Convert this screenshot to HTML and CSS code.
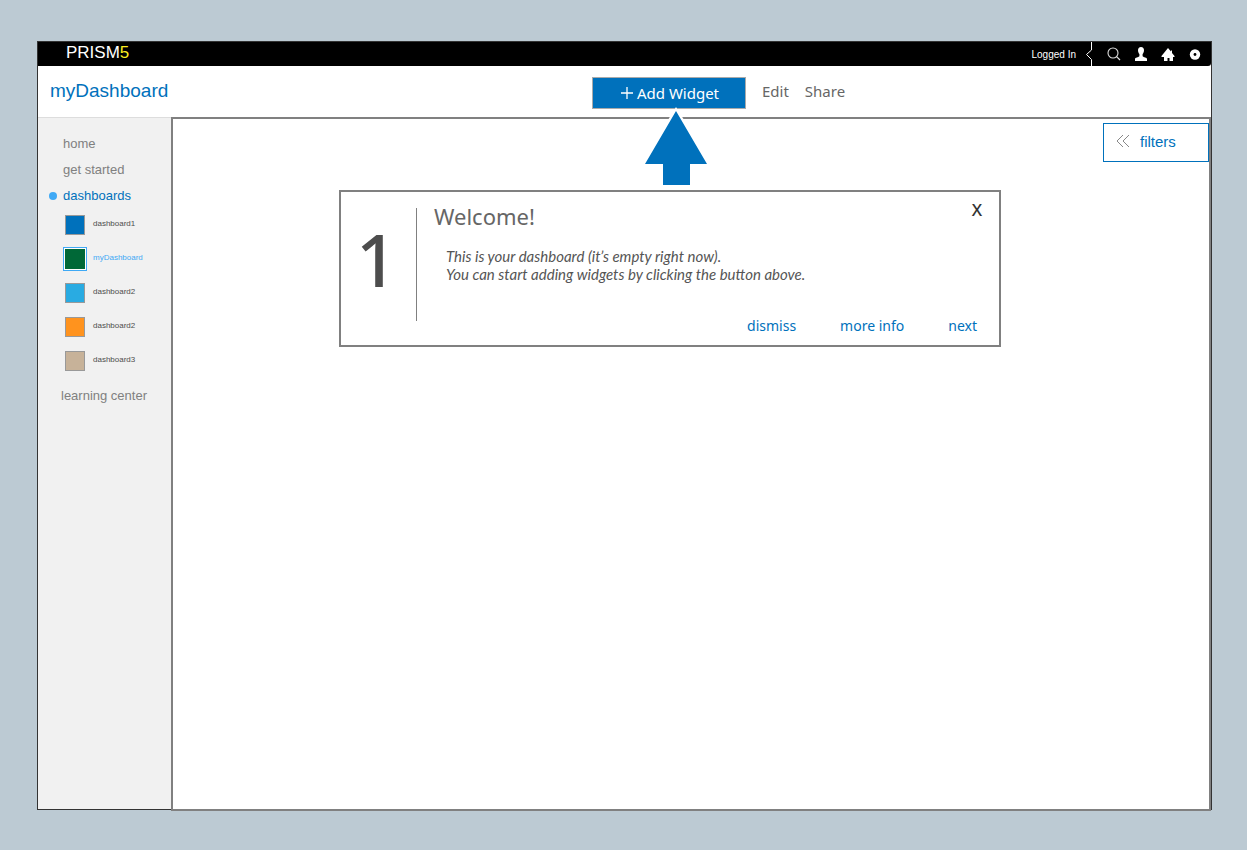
FILE: index.html
```html
<!DOCTYPE html>
<html lang="en">
<head>
<meta charset="utf-8">
<meta name="viewport" content="width=device-width, initial-scale=1">
<title>PRISM5 – myDashboard</title>
<link rel="stylesheet" href="styles.css">
</head>
<body>
<div class="frame">
  <header class="topbar">
    <a class="brand" href="#">PRISM<span class="brand-accent">5</span></a>
    <div class="account">
      <span class="status">Logged In</span>
      <svg class="notch" width="8" height="24" viewBox="0 0 8 24" aria-hidden="true"><path d="M6.500 0V8L1.500 12.500L6.500 17.500V24" fill="none" stroke="#fff"/></svg>
      <button class="icon-button search" aria-label="Search"><svg width="16" height="16" viewBox="0 0 16 16"><circle cx="7" cy="7" r="5" fill="none" stroke="#ddd" stroke-width="1.100"/><path d="M10.600 10.600L14 14" stroke="#ddd" stroke-width="1.300"/></svg></button>
      <button class="icon-button" aria-label="Profile"><svg width="14" height="16" viewBox="0 0 14 16"><path d="M7 1C9 1 10 2.300 10 4.200C10 6 9.200 7.300 8.600 8V10.300C9.500 11.300 13 11.500 13 13V15H1V13C1 11.500 4.500 11.300 5.400 10.300V8C4.800 7.300 4 6 4 4.200C4 2.300 5 1 7 1Z" fill="#fff"/></svg></button>
      <button class="icon-button" aria-label="Home"><svg width="14" height="16" viewBox="0 0 14 16"><path d="M7 2L10 5.500V4.500H11V7L13.500 10V11H12V15H8.500V12H6.500V15H3V11H.5V10Z" fill="#fff"/></svg></button>
      <button class="icon-button" aria-label="Settings"><svg width="14" height="16" viewBox="0 0 14 16"><circle cx="7" cy="8.500" r="5.200" fill="#fff"/><circle cx="7" cy="8.500" r="1.400" fill="#000"/></svg></button>
    </div>
  </header>
  <div class="toolbar">
    <h1 class="title">myDashboard</h1>
    <div class="actions">
      <button class="add"><svg width="12" height="12" viewBox="0 0 12 12" aria-hidden="true"><path d="M6 0V12M0 6H12" stroke="#fff" stroke-width="1.300"/></svg>Add Widget</button>
      <button class="action">Edit</button>
      <button class="action">Share</button>
    </div>
  </div>
  <div class="content">
    <nav class="sidebar">
      <ul class="menu">
        <li><a class="menu-link" href="#">home</a></li>
        <li><a class="menu-link" href="#">get started</a></li>
        <li class="current"><a class="menu-link" href="#">dashboards</a>
          <ul class="boards">
            <li><a class="board" href="#"><span class="swatch blue"></span><span class="board-name">dashboard1</span></a></li>
            <li><a class="board selected" href="#"><span class="swatch green"></span><span class="board-name">myDashboard</span></a></li>
            <li><a class="board" href="#"><span class="swatch sky"></span><span class="board-name">dashboard2</span></a></li>
            <li><a class="board" href="#"><span class="swatch orange"></span><span class="board-name">dashboard2</span></a></li>
            <li><a class="board" href="#"><span class="swatch tan"></span><span class="board-name">dashboard3</span></a></li>
          </ul>
        </li>
        <li><a class="menu-link learning" href="#">learning center</a></li>
      </ul>
    </nav>
    <main class="canvas">
      <button class="filters"><svg width="14" height="12" viewBox="0 0 14 12" aria-hidden="true"><path d="M7 0L1 6L7 12M13 0L7 6L13 12" fill="none" stroke="#888"/></svg>filters</button>
      <section class="tip" aria-labelledby="tip-title">
        <svg class="arrow" width="68" height="78" viewBox="0 0 68 78" aria-hidden="true"><path d="M34 0L68 55H49V78H19V55H0Z" fill="#fff"/><path d="M34 4L65 57H48V78H21V57H3Z" fill="#0071bc"/></svg>
        <div class="step">1</div>
        <div class="tip-body">
          <div class="tip-head">
            <h2 class="tip-title" id="tip-title">Welcome!</h2>
            <button class="close" aria-label="Close">X</button>
          </div>
          <p class="tip-text">This is your dashboard (it’s empty right now).<br>You can start adding widgets by clicking the button above.</p>
          <div class="tip-links">
            <a href="#">dismiss</a>
            <a href="#">more info</a>
            <a href="#">next</a>
          </div>
        </div>
      </section>
    </main>
  </div>
</div>
</body>
</html>
```
FILE: styles.css
```css
* { box-sizing: border-box; }
body {
  margin: 0;
  min-height: 100vh;
  display: flex;
  padding: 41px 35px 40px 37px;
  background: #bccad3;
  font-family: "Liberation Sans", Arial, sans-serif;
}
button { margin: 0; padding: 0; border: 0; background: none; font: inherit; color: inherit; cursor: pointer; }
a { color: inherit; text-decoration: none; }
ul { list-style: none; margin: 0; padding: 0; }
h1, h2, p { margin: 0; font-weight: normal; }

.frame { flex: 1; min-width: 0; display: flex; flex-direction: column; border: 1px solid #333; background: #fff; }

.topbar { display: flex; justify-content: space-between; align-items: center; height: 24px; padding: 0 9px 0 28px; background: #000; color: #fff; border-radius: 0 0 3px 0; }
.brand { font-size: 17px; line-height: 20px; padding-bottom: 3px; }
.brand-accent { color: #fcee21; }
.account { display: flex; align-items: center; gap: 13px; }
.status { font-size: 10px; margin-right: -4px; }
.notch { display: block; }
.icon-button { display: flex; }
.search { margin-right: -1px; }

.toolbar { display: flex; align-items: center; height: 51px; }
.title { flex: 0 1 554px; padding: 0 0 2px 12px; font-size: 19px; line-height: 28px; color: #0071bc; }
.actions { display: flex; align-items: center; gap: 16px; padding-top: 2px; font: 15px/20px "Noto Sans", sans-serif; color: #666; }
.add { display: flex; align-items: center; justify-content: center; gap: 4px; width: 154px; height: 32px; padding-left: 2px; border: 1px solid #aaa; background: #0071bc; color: #fff; font-size: 15px; }
.action { padding-bottom: 4px; }

.content { flex: 1; display: flex; min-height: 0; }
.sidebar { flex: 0 0 133px; background: #f1f1f1; border-top: 1px solid #ddd; color: #808080; }
.menu { padding: 13px 0 0 25px; font-size: 13px; line-height: 26px; }
.menu-link { display: block; }
.current { position: relative; }
.current > .menu-link { color: #0071bc; }
.current::before { content: ""; position: absolute; left: -14px; top: 9px; width: 8px; height: 8px; border-radius: 50%; background: #3fa9f5; }
.learning { margin-left: -2px; }
.boards { display: grid; gap: 10px; padding: 4px 0 10px; }
.board { display: flex; align-items: center; gap: 6px; height: 24px; font-size: 8px; line-height: 12px; color: #4d4d4d; }
.board-name { padding-bottom: 2px; }
.swatch { width: 20px; height: 20px; margin: 2px; border: 1px solid #999; }
.selected { color: #3fa9f5; }
.selected .swatch { width: 24px; height: 24px; margin: 0; border: 1px solid #3fa9f5; box-shadow: inset 0 0 0 1px #fff; }
.blue { background: #0071bc; }
.green { background: #006837; }
.sky { background: #29abe2; }
.orange { background: #ff931e; }
.tan { background: #c7b299; }

.canvas { flex: 1; min-width: 0; display: flex; flex-direction: column; margin-bottom: -2px; border: 2px solid #808080; padding-top: 4px; }
.filters { align-self: flex-end; display: flex; align-items: center; gap: 10px; width: 106px; height: 39px; padding: 0 0 3px 12px; border: 1px solid #0071bc; color: #0071bc; font-size: 15px; }

.tip { position: relative; display: flex; width: 662px; max-width: 80%; min-height: 157px; margin: 28px 0 0 166px; padding: 16px 14px 9px 0; border: 2px solid #808080; font-family: "Noto Sans", sans-serif; color: #666; }
.arrow { position: absolute; left: 301px; top: -85px; }
.step { flex: 0 0 76px; height: 113px; padding-right: 4px; border-right: 1px solid #808080; font-size: 72px; line-height: 102px; text-align: center; color: #4d4d4d; font-weight: 500; }
.tip-body { flex: 1; display: flex; flex-direction: column; padding-left: 17px; }
.tip-head { display: flex; justify-content: space-between; align-items: flex-start; }
.tip-title { font-size: 22px; line-height: 16px; }
.close { width: 16px; font-size: 17px; line-height: 4px; font-weight: 500; color: #333; }
.tip-text { padding: 23px 0 0 12px; font: italic 15px/18px Lato, "Noto Sans", sans-serif; color: #555; }
.tip-links { display: flex; justify-content: flex-end; gap: 44px; margin-top: auto; padding-right: 8px; font-size: 14px; line-height: 20px; color: #0071bc; }
```
